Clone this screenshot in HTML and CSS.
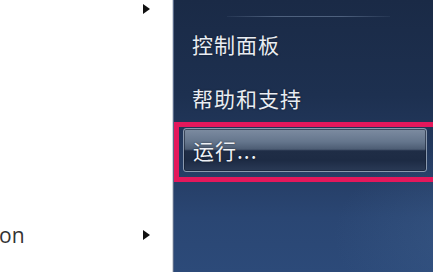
FILE: index.html
```html
<!DOCTYPE html>
<html lang="zh-CN">
<head>
<meta charset="utf-8">
<title>开始菜单</title>
<link rel="stylesheet" href="styles.css">
</head>
<body>
<div class="menu">
  <div class="left-pane">
    <div class="row row-top">
      <span class="arrow"></span>
    </div>
    <div class="row row-bottom">
      <span class="prog-label">on</span>
      <span class="arrow"></span>
    </div>
  </div>
  <div class="right-pane">
    <div class="separator"></div>
    <div class="item item-first">控制面板</div>
    <div class="item item-second">帮助和支持</div>
    <div class="highlight">
      <div class="run-button">运行...</div>
    </div>
  </div>
</div>
</body>
</html>
```

FILE: styles.css
```css
html, body {
  margin: 0;
  padding: 0;
  width: 433px;
  height: 272px;
  overflow: hidden;
  background: #ffffff;
}

.menu {
  display: flex;
  width: 433px;
  height: 272px;
  overflow: hidden;
}

.left-pane {
  width: 172px;
  flex: none;
  background: #ffffff;
  border-right: 1px solid #d3d7dd;
  display: flex;
  flex-direction: column;
}

.row {
  display: flex;
  align-items: center;
}

.row-top {
  height: 10px;
  margin-top: 4px;
  padding-left: 143px;
}

.row-bottom {
  margin-top: auto;
  margin-bottom: 23px;
  height: 28px;
  justify-content: space-between;
  padding-right: 22px;
}

.prog-label {
  font-family: "Open Sans", "Noto Sans", sans-serif;
  font-size: 21px;
  line-height: 28px;
  color: #333333;
  margin-left: -1px;
}

.arrow {
  width: 0;
  height: 0;
  border-left: 7px solid #111111;
  border-top: 5px solid transparent;
  border-bottom: 5px solid transparent;
}

.right-pane {
  flex: 1;
  min-width: 0;
  border-left: 1px solid #5a6b8a;
  display: flex;
  flex-direction: column;
  padding-top: 16px;
  overflow: hidden;
  background:
    radial-gradient(ellipse 140px 90px at 300px 235px, rgba(70, 105, 150, 0.35), rgba(70, 105, 150, 0) 100%),
    linear-gradient(180deg, #1a2a46 0%, #1d3050 35%, #23395e 55%, #2a4673 80%, #2c4a79 100%);
}

.separator {
  width: 163px;
  height: 1px;
  margin-left: 53px;
  background: linear-gradient(90deg, rgba(120, 140, 170, 0.1), rgba(120, 140, 170, 0.55) 30%, rgba(120, 140, 170, 0.55) 70%, rgba(120, 140, 170, 0.1));
}

.item {
  height: 48px;
  line-height: 48px;
  padding-left: 18px;
  font-family: "Noto Sans CJK SC", "Noto Sans", sans-serif;
  font-size: 21px;
  letter-spacing: 1px;
  color: #e9edf3;
  text-shadow: 0 0 2px rgba(0, 0, 0, 0.5);
  white-space: nowrap;
}

.item-first {
  margin-top: 3px;
}

.item-second {
  margin-top: 6px;
}

.highlight {
  width: 268px;
  height: 49px;
  border: 5px solid #e4185c;
  padding: 1px 0 0 4px;
  flex: none;
}

.run-button {
  width: 244px;
  height: 44px;
  box-sizing: border-box;
  border: 1px solid #8a99ae;
  border-radius: 3px;
  padding-left: 9px;
  line-height: 42px;
  font-family: "Noto Sans CJK SC", "Noto Sans", sans-serif;
  font-size: 21px;
  letter-spacing: 1px;
  color: #eef1f6;
  text-shadow: 0 0 2px rgba(0, 0, 0, 0.6);
  white-space: nowrap;
  background: linear-gradient(180deg, #7d8ca1 0%, #65768d 30%, #4d5d74 48%, #1f2d46 52%, #1d2b44 75%, #2a3a56 100%);
  box-shadow: inset 0 0 0 1px rgba(20, 30, 50, 0.6);
}
```
